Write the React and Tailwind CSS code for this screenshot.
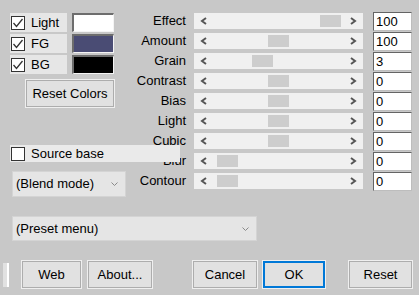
import React from "react";

const sliders = [
  { label: "Effect", pos: 126, value: "100" },
  { label: "Amount", pos: 74, value: "100" },
  { label: "Grain", pos: 58, value: "3" },
  { label: "Contrast", pos: 74, value: "0" },
  { label: "Bias", pos: 74, value: "0" },
  { label: "Light", pos: 74, value: "0" },
  { label: "Cubic", pos: 74, value: "0" },
  { label: "Blur", pos: 23, value: "0" },
  { label: "Contour", pos: 23, value: "0" },
];

const Check = ({ checked }) => (
  <div className="w-[14px] h-[14px] border border-[#333] bg-white flex items-center justify-center shrink-0">
    {checked && (
      <svg width="12" height="12" viewBox="0 0 12 12">
        <polyline points="1.5,6 4.5,9.5 10.5,2" fill="none" stroke="#333" strokeWidth="1.3" />
      </svg>
    )}
  </div>
);

const Chevron = ({ dir, color = "#555", w = 8 }) => (
  <svg width={w} height="8" viewBox="0 0 8 8">
    <polyline
      points={dir === "left" ? "6,1 2,4 6,7" : dir === "right" ? "2,1 6,4 2,7" : "1,2.5 4,5.5 7,2.5"}
      fill="none"
      stroke={color}
      strokeWidth={dir === "down" ? "1" : "2"}
    />
  </svg>
);

const ColorRow = ({ label, color }) => (
  <div className="flex items-center h-[19px]">
    <div className="flex items-center gap-[6px] w-[57px] h-full bg-[#e6e6e6] pl-[1px]">
      <Check checked />
      <span>{label}</span>
    </div>
    <div
      className={`ml-[5px] w-[42px] h-full border-t-2 border-l-2 border-[#6d6d6d] border-r border-b border-r-[#f4f4f4] border-b-[#f4f4f4] ${color}`}
    />
  </div>
);

const Btn = ({ children, className = "" }) => (
  <button
    className={`h-[27px] bg-[#e1e1e1] border border-[#adadad] shadow-[0_0_0_1px_#efefef] text-[13px] text-black ${className}`}
  >
    {children}
  </button>
);

export default function App() {
  return (
    <div
      className="w-[419px] h-[295px] bg-[#c8c8c8] text-[13px] text-black overflow-hidden"
      style={{ fontFamily: '"Liberation Sans", Arial, sans-serif' }}
    >
      <div className="flex pt-[12px] pl-[10px]">
        <div className="w-[120px] flex flex-col pt-[1px]">
          <div className="flex flex-col gap-[2px]">
            <ColorRow label="Light" color="bg-white" />
            <ColorRow label="FG" color="bg-[#4a4c74]" />
            <ColorRow label="BG" color="bg-black" />
          </div>
          <Btn className="mt-[6px] ml-[16px] w-[88px] h-[25px]">Reset Colors</Btn>
          <div className="relative z-10 mt-[38px] w-[170px] h-[17px] bg-[#eaeaea] flex items-center gap-[6px] pl-[1px]">
            <Check />
            <span>Source base</span>
          </div>
          <div className="mt-[9px] ml-[2px] w-[114px] h-[26px] bg-[#e5e5e5] border border-[#d4d4d4] flex items-center justify-between pl-[3px] pr-[6px]">
            <span>(Blend mode)</span>
            <Chevron dir="down" color="#8a8a8a" w={9} />
          </div>
        </div>
        <div className="flex flex-col">
          {sliders.map((s) => (
            <div key={s.label} className="flex items-start h-[20px]">
              <div className="w-[56px] text-right leading-[16px] mt-[1px]">{s.label}</div>
              <div className="relative ml-[8px] mt-[1px] w-[169px] h-[16px] bg-[#f0f0f0] flex items-center justify-between px-[6px]">
                <Chevron dir="left" />
                <div
                  className="absolute top-[2px] w-[21px] h-[12px] bg-[#cdcdcd]"
                  style={{ left: s.pos }}
                />
                <Chevron dir="right" />
              </div>
              <div className="ml-[10px] w-[39px] h-[19px] bg-white border border-[#646464] border-r-[#bdbdbd] border-b-[#bdbdbd] pl-[2px] leading-[17px]">
                {s.value}
              </div>
            </div>
          ))}
        </div>
      </div>
      <div className="mt-[19px] ml-[12px] w-[245px] h-[25px] bg-[#e5e5e5] border border-[#d4d4d4] flex items-center justify-between pl-[3px] pr-[6px]">
        <span>(Preset menu)</span>
        <Chevron dir="down" color="#8a8a8a" w={9} />
      </div>
      <div className="flex mt-[20px] items-start">
        <div className="ml-[3px] w-[6px] h-[24px] mt-[2px] bg-[#e1e1e1] border-r-2 border-white" />
        <Btn className="ml-[13px] w-[59px]">Web</Btn>
        <Btn className="ml-[7px] w-[64px]">About...</Btn>
        <Btn className="ml-[41px] w-[64px]">Cancel</Btn>
        <button className="ml-[6px] w-[62px] h-[27px] bg-[#e1e1e1] border-2 border-[#0078d7] shadow-[0_0_0_1px_#efefef] text-[13px] text-black">
          OK
        </button>
        <Btn className="ml-[24px] w-[63px]">Reset</Btn>
      </div>
    </div>
  );
}
